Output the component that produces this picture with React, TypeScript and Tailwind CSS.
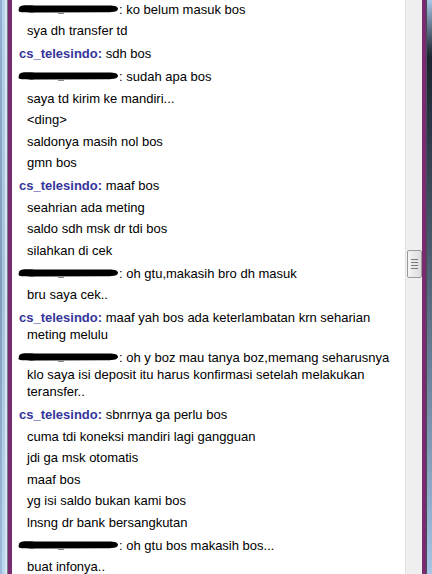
import React from "react";

type Row = { who?: "cs" | "user"; text: string };

const rows: Row[] = [
  { who: "user", text: "ko belum masuk bos" },
  { text: "sya dh transfer td" },
  { who: "cs", text: "sdh bos" },
  { who: "user", text: "sudah apa bos" },
  { text: "saya td kirim ke mandiri..." },
  { text: "<ding>" },
  { text: "saldonya masih nol bos" },
  { text: "gmn bos" },
  { who: "cs", text: "maaf bos" },
  { text: "seahrian ada meting" },
  { text: "saldo sdh msk dr tdi bos" },
  { text: "silahkan di cek" },
  { who: "user", text: "oh gtu,makasih bro dh masuk" },
  { text: "bru saya cek.." },
  { who: "cs", text: "maaf yah bos ada keterlambatan krn seharian meting melulu" },
  {
    who: "user",
    text: "oh y boz mau tanya boz,memang seharusnya klo saya isi deposit itu harus konfirmasi setelah melakukan teransfer..",
  },
  { who: "cs", text: "sbnrnya ga perlu bos" },
  { text: "cuma tdi koneksi mandiri lagi gangguan" },
  { text: "jdi ga msk otomatis" },
  { text: "maaf bos" },
  { text: "yg isi saldo bukan kami bos" },
  { text: "lnsng dr bank bersangkutan" },
  { who: "user", text: "oh gtu bos makasih bos..." },
  { text: "buat infonya.." },
];

// marker scribble over the hidden username
function Redacted() {
  return (
    <span className="relative -ml-[2px] inline-block h-[12px] w-[102px] align-[-1px]">
      <svg width="102" height="12" viewBox="0 0 102 12" className="absolute left-0 top-0">
        <path
          d="M2 5 C3 2 8 2.2 20 2.6 L91 2.4 C98 2.3 101 3.5 101 5.8 C101 8.4 97 9.4 89 9.3 L22 9.6 C8 9.8 2 9.6 1.5 7.8 Z"
          fill="#000"
        />
      </svg>
      <span className="absolute left-[41px] top-[10px] h-px w-[6px] bg-[#8a8a8a]" />
    </span>
  );
}

function ChatRow({ row }: { row: Row }) {
  if (!row.who) {
    return <div className="pl-[15px] pr-[4px] py-[2.25px]">{row.text}</div>;
  }
  return (
    <div className="pl-[15px] pr-[4px] pt-[3.75px] pb-[2.25px] -indent-[8px]">
      {row.who === "cs" ? (
        <span className="font-bold text-[#35359a]">cs_telesindo:</span>
      ) : (
        <>
          <Redacted />
          <span>:</span>
        </>
      )}{" "}
      {row.text}
    </div>
  );
}

export default function App() {
  return (
    <div className="flex h-[574px] w-[432px] overflow-hidden bg-white">
      {/* left window frame */}
      <div className="flex h-full w-[12px] shrink-0">
        <div className="w-[2px] bg-gradient-to-b from-[#8fb0d2] via-[#7f9cbc] to-[#9dbbdc]" />
        <div className="w-[3px] bg-gradient-to-b from-[#b9d3ec] via-[#a9c2dc] to-[#bcd6ef]" />
        <div className="w-[2px] bg-[#d6e6f5]" />
        <div className="w-px bg-[#7c7c88]" />
        <div className="w-[4px] bg-[#7a2b70]" />
      </div>

      {/* chat log */}
      <div
        className="-mt-[3px] flex-1 overflow-hidden text-[13px] leading-[17px] text-black"
        style={{ fontFamily: "Tahoma, 'Liberation Sans', Arial, sans-serif" }}
      >
        {rows.map((r, i) => (
          <ChatRow key={i} row={r} />
        ))}
      </div>

      {/* scrollbar */}
      <div className="flex h-full w-[17px] shrink-0 flex-col border-l border-[#e2e2e2] bg-[#efefef]">
        <div className="h-[250px]" />
        <div className="mx-auto flex h-[28px] w-[15px] flex-col items-center justify-center gap-[2px] rounded-[2px] border border-[#9a9a9a] bg-gradient-to-r from-[#f4f4f4] to-[#dcdcdc]">
          <div className="h-px w-[7px] bg-[#777]" />
          <div className="h-px w-[7px] bg-[#777]" />
          <div className="h-px w-[7px] bg-[#777]" />
          <div className="h-px w-[7px] bg-[#777]" />
        </div>
      </div>

      {/* right window frame */}
      <div className="flex h-full w-[10px] shrink-0">
        <div className="w-[4px] bg-[#7a2b70]" />
        <div className="w-px bg-[#4a4a58]" />
        <div className="flex-1 bg-gradient-to-b from-[#a9c9ea] via-[#1c2430] via-10% to-[#a6c6e8]" />
      </div>
    </div>
  );
}
